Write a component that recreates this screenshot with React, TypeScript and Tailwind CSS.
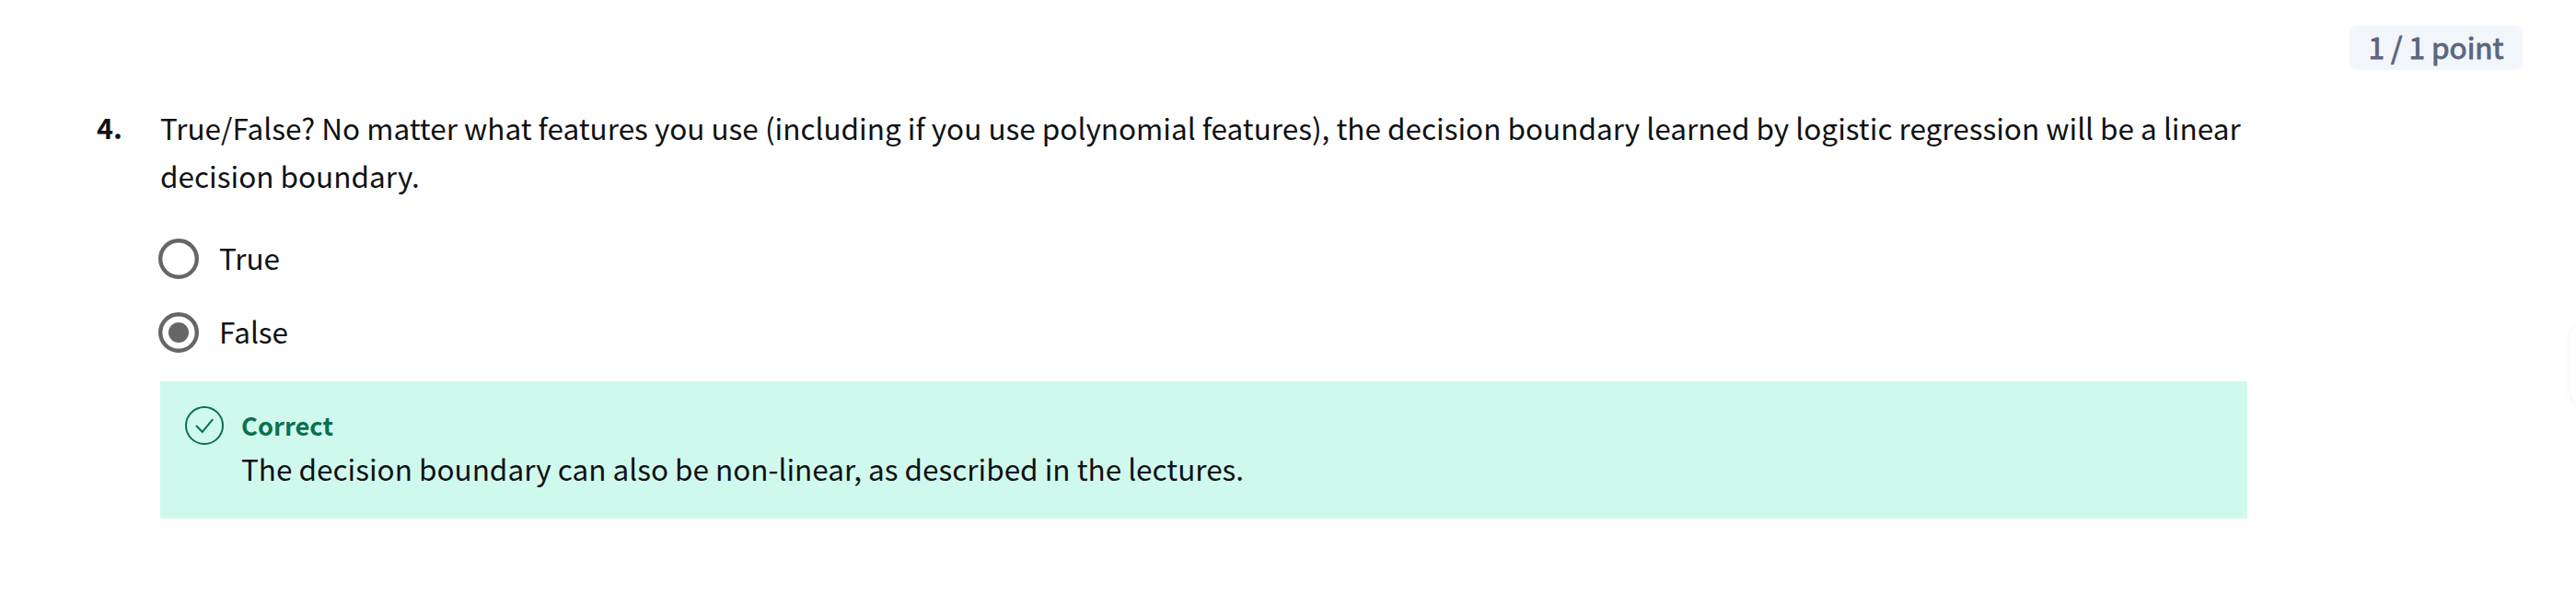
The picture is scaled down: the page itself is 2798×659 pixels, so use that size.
import type { ReactNode } from 'react';

function Radio({ checked, children }: { checked?: boolean; children: ReactNode }) {
  return (
    <div role="radio" aria-checked={!!checked} className="flex h-[44px] items-center gap-[22px]">
      <svg viewBox="0 0 44 44" className="size-[44px] shrink-0" fill="none">
        <circle cx="22" cy="22" r="19.8" stroke="#666666" strokeWidth="4.4" />
        {checked && <circle cx="22" cy="22" r="11" fill="#666666" />}
      </svg>
      <span className="-mt-[4px] text-[31.5px] leading-[44px]">{children}</span>
    </div>
  );
}

export default function App() {
  return (
    <main className="relative flex h-[659px] w-[2798px] flex-col overflow-hidden bg-white pt-[28px] font-['Noto_Sans_CJK_SC',sans-serif] text-[#0f1114]">
      <div className="mr-[58px] flex h-[48px] w-[188px] items-center justify-center self-end rounded-[8px] bg-[#f2f5fa] pb-[3px] text-[31.5px] leading-[45px] whitespace-nowrap text-[#5b6780] [-webkit-text-stroke:1px_#5b6780]">
        1 / 1 point
      </div>
      <div className="mt-[36px] flex text-[31.52px] leading-[52px]">
        <div className="ml-[105px] w-[69px] shrink-0 text-[30.5px] font-bold">4.</div>
        <div className="w-[2267px]">
          <p className="whitespace-nowrap">
            True/False? No matter what features you use (including if you use polynomial features), the decision boundary learned by logistic regression will be a linear
            <br />
            decision boundary.
          </p>
        </div>
      </div>
      <div role="radiogroup" className="mt-[43px] ml-[172px] flex flex-col gap-[36px]">
        <Radio>True</Radio>
        <Radio checked>False</Radio>
      </div>
      <section className="mt-[31px] ml-[174px] flex h-[149px] w-[2267px] gap-[19px] bg-[#d0f9ed] pt-[27px] pl-[27px]">
        <svg viewBox="0 0 42 42" className="size-[42px] shrink-0" fill="none" stroke="#087051" strokeWidth="2" strokeLinecap="round">
          <circle cx="21" cy="21" r="20" />
          <path d="M12.5 21.5 18.8 28 29.8 14.7" />
        </svg>
        <div>
          <h2 className="text-[27.3px] leading-[40px] font-bold text-[#087051]">Correct</h2>
          <p className="mt-px text-[31.5px] leading-[52px]">The decision boundary can also be non-linear, as described in the lectures.</p>
        </div>
      </section>
      <aside className="absolute top-[350px] left-[2792px] h-[90px] w-[90px] rounded-[16px] bg-white shadow-[0_2px_8px_rgba(0,0,0,0.06)]" />
    </main>
  );
}
